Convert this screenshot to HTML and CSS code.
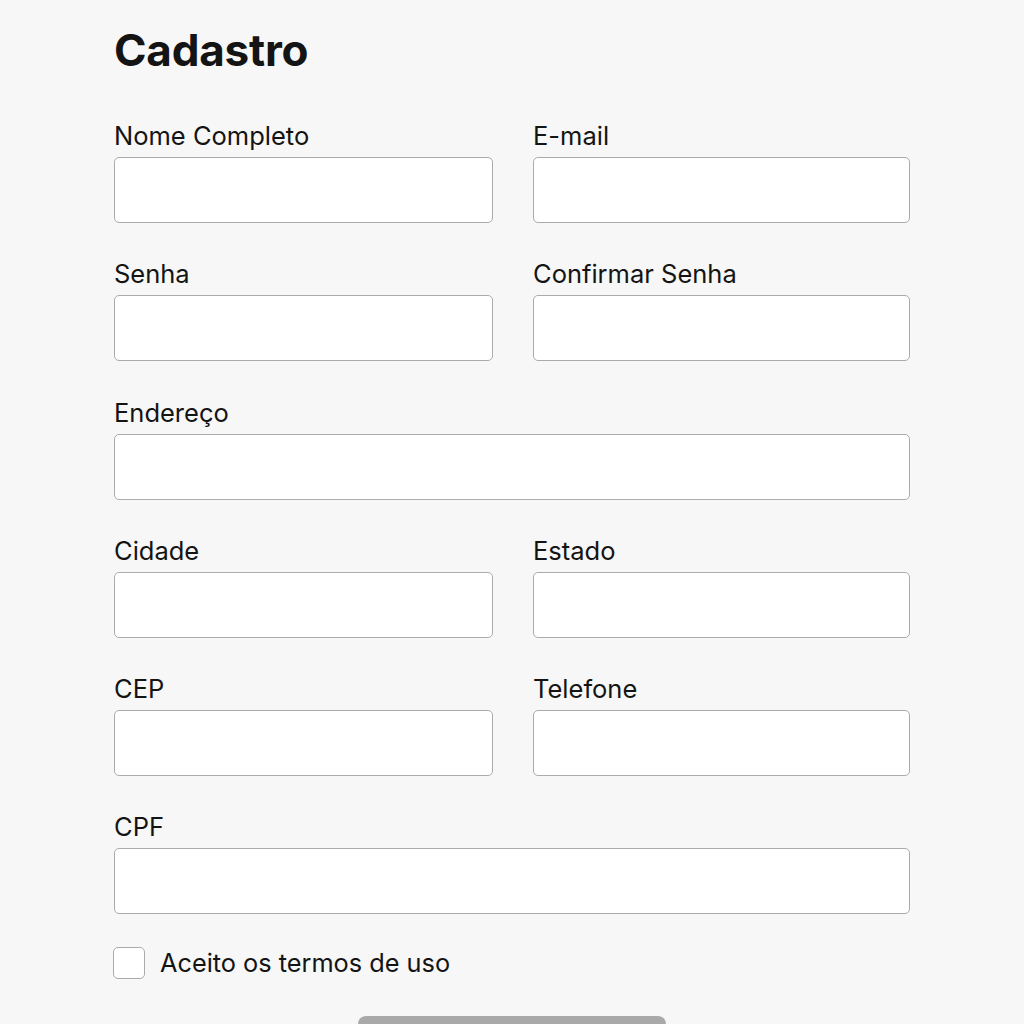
FILE: index.html
```html
<!DOCTYPE html>
<html lang="pt-BR">
<head>
<meta charset="utf-8">
<title>Cadastro</title>
<link rel="stylesheet" href="styles.css">
</head>
<body>
<main class="page">
  <h1 class="title">Cadastro</h1>
  <form class="form">
    <div class="grid">
      <label class="field"><span class="label">Nome Completo</span><input class="input" type="text"></label>
      <label class="field"><span class="label">E-mail</span><input class="input" type="email"></label>
      <label class="field"><span class="label">Senha</span><input class="input" type="password"></label>
      <label class="field"><span class="label">Confirmar Senha</span><input class="input" type="password"></label>
      <label class="field full"><span class="label">Endereço</span><input class="input" type="text"></label>
      <label class="field"><span class="label">Cidade</span><input class="input" type="text"></label>
      <label class="field"><span class="label">Estado</span><input class="input" type="text"></label>
      <label class="field"><span class="label">CEP</span><input class="input" type="text"></label>
      <label class="field"><span class="label">Telefone</span><input class="input" type="text"></label>
      <label class="field full"><span class="label">CPF</span><input class="input" type="text"></label>
    </div>
    <label class="terms"><span class="box"></span><span class="terms-text">Aceito os termos de uso</span></label>
    <div class="actions"><button class="submit" type="button"></button></div>
  </form>
</main>
</body>
</html>
```
FILE: styles.css
```css
* { box-sizing: border-box; }
html, body { margin: 0; padding: 0; }
body {
  background: #f7f7f7;
  font-family: Inter, "Noto Sans", sans-serif;
  color: #141414;
}
.page {
  width: 796px;
  margin: 0 0 0 114px;
  padding-top: 24px;
}
.title {
  margin: 0;
  font-size: 44px;
  font-weight: 700;
  line-height: 52px;
  letter-spacing: -0.2px;
}
.form { margin-top: 45px; }
.grid {
  display: grid;
  grid-template-columns: 379px 377px;
  column-gap: 40px;
  row-gap: 36.3px;
}
.field { display: flex; flex-direction: column; gap: 6px; }
.full { grid-column: 1 / -1; }
.label {
  font-size: 25.5px;
  line-height: 30px;
  font-weight: 400;
}
.input {
  height: 66px;
  width: 100%;
  background: #fff;
  border: 1.5px solid #ababab;
  border-radius: 5px;
  margin: 0;
}
.terms {
  display: flex;
  align-items: center;
  gap: 15px;
  margin-top: 33px;
  margin-left: -1px;
}
.box {
  width: 32px;
  height: 32px;
  background: #fff;
  border: 1.5px solid #ababab;
  border-radius: 5px;
}
.terms-text { font-size: 25.3px; line-height: 32px; }
.actions { display: flex; justify-content: center; margin-top: 37px; }
.submit {
  width: 308px;
  height: 56px;
  background: #a9a9a9;
  border: none;
  border-radius: 8px;
}
```
